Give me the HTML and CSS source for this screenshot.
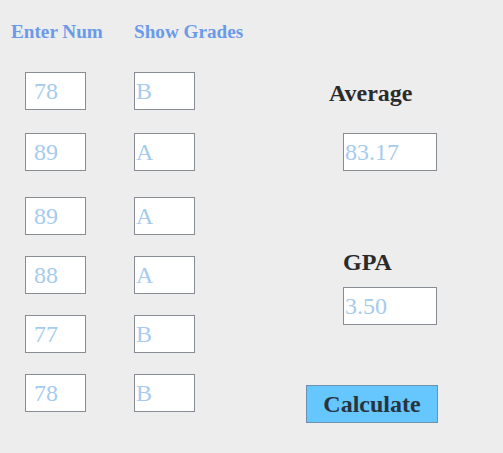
FILE: index.html
```html
<!DOCTYPE html>
<html>
<head>
<meta charset="utf-8">
<link rel="stylesheet" href="styles.css">
</head>
<body>
<div class="page">
  <div class="grades">
    <div class="row head">
      <div class="cell"><span class="col-title">Enter Num</span></div>
      <div class="cell"><span class="col-title">Show Grades</span></div>
    </div>
    <div class="row r1">
      <div class="cell"><input class="box num" type="text" value="78"></div>
      <div class="cell"><input class="box grade" type="text" value="B"></div>
    </div>
    <div class="row r2">
      <div class="cell"><input class="box num" type="text" value="89"></div>
      <div class="cell"><input class="box grade" type="text" value="A"></div>
    </div>
    <div class="row r3">
      <div class="cell"><input class="box num" type="text" value="89"></div>
      <div class="cell"><input class="box grade" type="text" value="A"></div>
    </div>
    <div class="row rn">
      <div class="cell"><input class="box num" type="text" value="88"></div>
      <div class="cell"><input class="box grade" type="text" value="A"></div>
    </div>
    <div class="row rn">
      <div class="cell"><input class="box num" type="text" value="77"></div>
      <div class="cell"><input class="box grade" type="text" value="B"></div>
    </div>
    <div class="row rn">
      <div class="cell"><input class="box num" type="text" value="78"></div>
      <div class="cell"><input class="box grade" type="text" value="B"></div>
    </div>
  </div>
  <div class="results">
    <div class="label avg-label">Average</div>
    <input class="box result avg-box" type="text" value="83.17">
    <div class="label gpa-label">GPA</div>
    <input class="box result gpa-box" type="text" value="3.50">
    <button class="calc" type="button">Calculate</button>
  </div>
</div>
</body>
</html>
```

FILE: styles.css
```css
html, body {
  margin: 0;
  padding: 0;
  background: #ededed;
}

body {
  font-family: "Liberation Serif", "Times New Roman", serif;
}

.page {
  display: flex;
  width: 503px;
  height: 453px;
}

.grades {
  width: 306px;
  box-sizing: border-box;
  padding-left: 11px;
  padding-top: 22px;
  display: flex;
  flex-direction: column;
}

.row {
  display: flex;
}

.cell {
  width: 123px;
  display: flex;
}

.cell:last-child {
  width: auto;
}

.col-title {
  font-weight: bold;
  font-size: 19.2px;
  line-height: 20px;
  color: #6b9ae9;
}

.r1 { margin-top: 30px; }
.r2 { margin-top: 23px; }
.r3 { margin-top: 26px; }
.rn { margin-top: 21px; }

.box {
  box-sizing: border-box;
  height: 38px;
  margin: 0;
  border: 1px solid #878c95;
  background: #ffffff;
  font-family: "Liberation Serif", "Times New Roman", serif;
  font-size: 24px;
  color: #a5cbef;
  padding: 0 0 0 1px;
  outline: none;
}

.num {
  width: 61px;
  margin-left: 14px;
  padding-left: 8px;
}

.grade {
  width: 61px;
}

.results {
  display: flex;
  flex-direction: column;
  align-items: flex-start;
  padding-top: 79px;
}

.label {
  font-weight: bold;
  font-size: 24px;
  line-height: 28px;
  color: #2b2b2b;
}

.avg-label {
  margin-left: 23px;
}

.result {
  width: 94px;
  margin-left: 37px;
}

.avg-box {
  margin-top: 26px;
}

.gpa-label {
  margin-left: 37px;
  margin-top: 77px;
}

.gpa-box {
  margin-top: 11px;
}

.calc {
  margin-top: 60px;
  width: 132px;
  height: 38px;
  box-sizing: border-box;
  border: 1px solid #6e8fae;
  background: #66c7ff;
  font-family: "Liberation Serif", "Times New Roman", serif;
  font-weight: bold;
  font-size: 24px;
  color: #28333d;
  padding: 0;
  cursor: pointer;
}
```
